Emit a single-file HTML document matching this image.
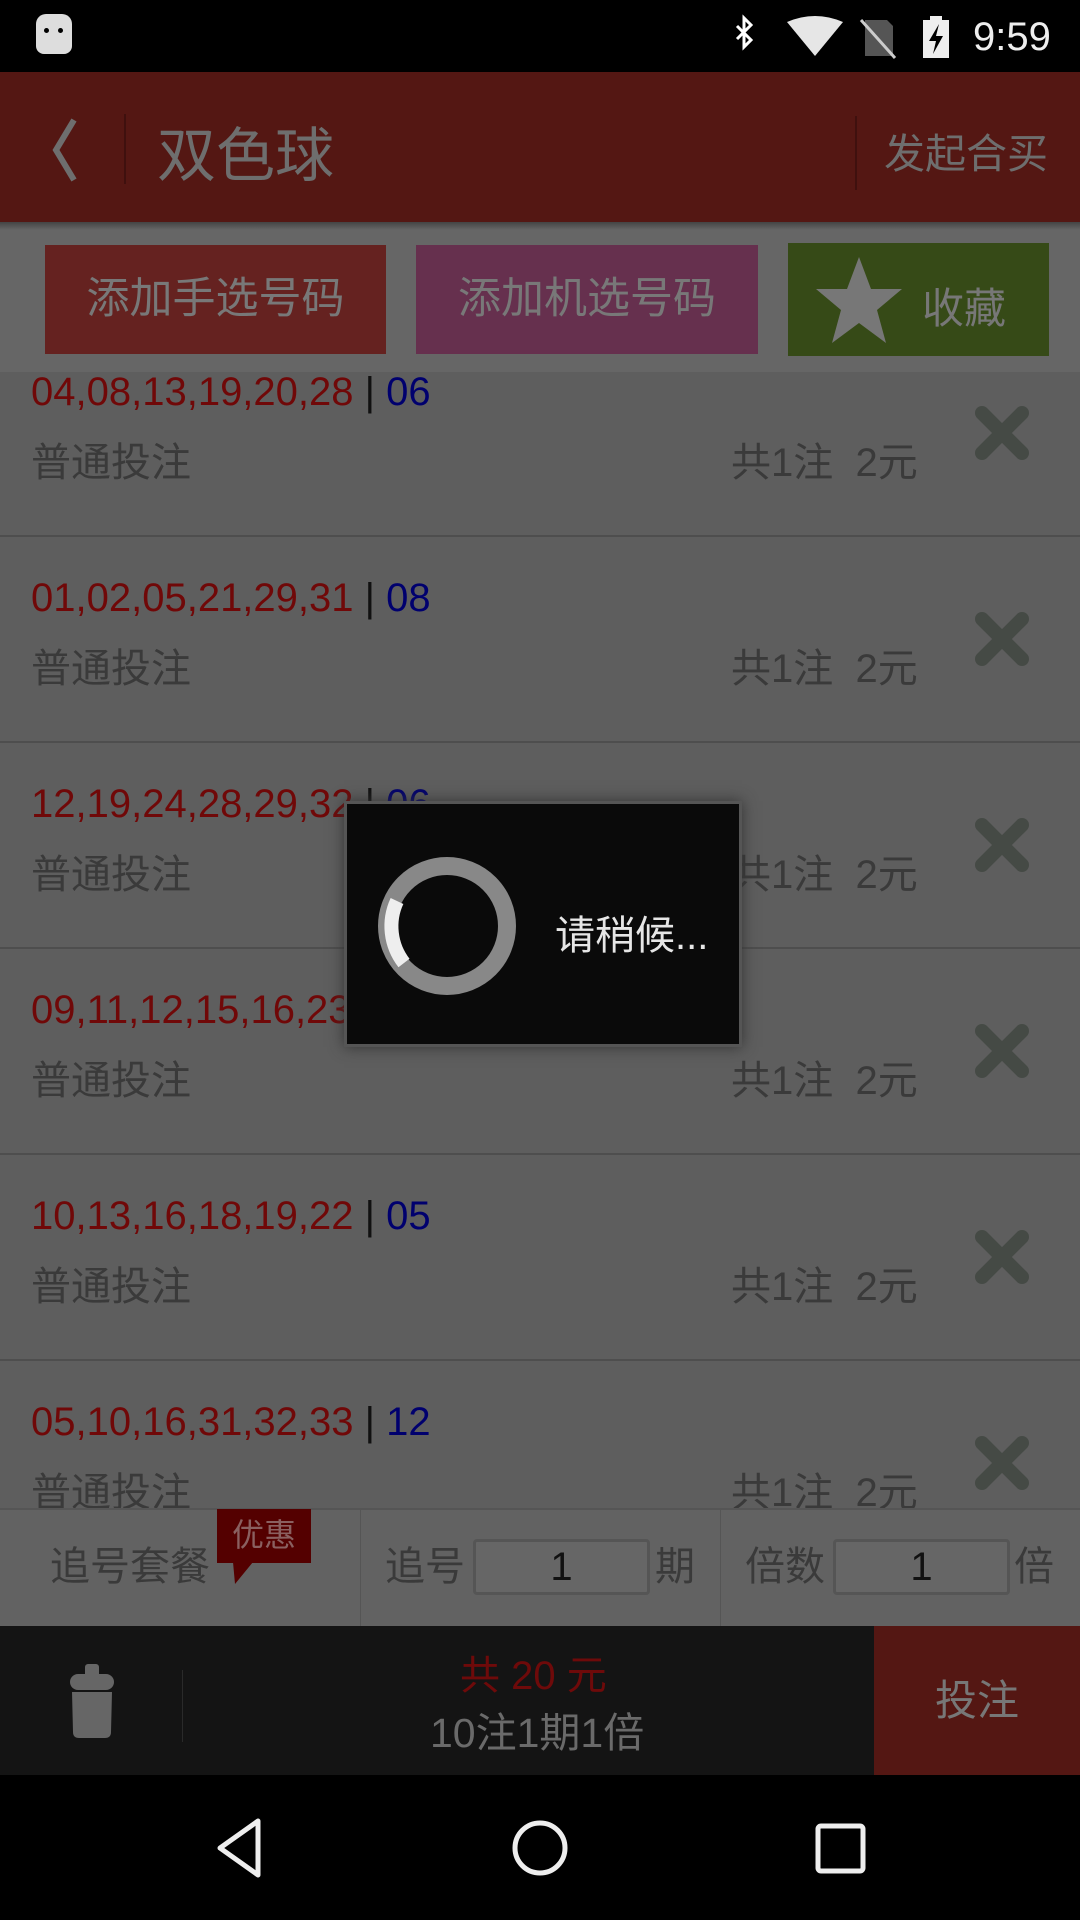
<!DOCTYPE html><html><head><meta charset="utf-8"><style>
*{margin:0;padding:0;box-sizing:border-box}
body{width:1080px;height:1920px;position:relative;overflow:hidden;background:#5e5e5e;font-family:"Liberation Sans","Noto Sans CJK SC",sans-serif}
.a{position:absolute;white-space:nowrap}
.num{font-size:40px;color:#700808;line-height:1}
.num b{font-weight:normal;color:#111}
.num i{font-style:normal;color:#00006e}
.t{font-size:40px;color:#3a3a3a;line-height:1}
</style></head><body>
<div class="a" style="left:0;top:0;width:1080px;height:72px;background:#000"></div>
<div class="a" style="left:36px;top:14px;width:36px;height:40px;background:#ddd;border-radius:10px 10px 8px 8px"></div>
<div class="a" style="left:44px;top:28px;width:5px;height:5px;background:#000;border-radius:50%"></div>
<div class="a" style="left:58px;top:28px;width:5px;height:5px;background:#000;border-radius:50%"></div>
<svg class="a" style="left:725px;top:12px" width="330" height="50" viewBox="0 0 330 50">
<path d="M12 14 L26 28 L19 35 L19 6 L26 13 L12 27" stroke="#fff" stroke-width="3" fill="none"/>
<path d="M62 10 Q90 -2 118 10 L90 44 Z" fill="#e6e6e6"/>
<path d="M140 8 H162 L168 14 V44 H140 Z" fill="#555"/><path d="M136 8 L170 46" stroke="#ccc" stroke-width="3"/>
<rect x="198" y="8" width="26" height="38" fill="#eee"/><rect x="205" y="4" width="12" height="5" fill="#eee"/>
<path d="M214 12 L204 29 H211 L208 42 L218 24 H211 Z" fill="#000"/>
<text x="248" y="38" fill="#eee" font-size="40" font-family="Liberation Sans">9:59</text>
</svg>
<div class="a" style="left:0;top:72px;width:1080px;height:150px;background:#541713"></div>
<svg class="a" style="left:44px;top:114px" width="40" height="70"><path d="M30 6 L12 36 L30 66" stroke="#6e6e6e" stroke-width="6" fill="none"/></svg>
<div class="a" style="left:124px;top:114px;width:2px;height:70px;background:#3f100e"></div>
<div class="a" style="left:157px;top:108px;font-size:59px;color:#6e6e6e">双色球</div>
<div class="a" style="left:855px;top:116px;width:2px;height:74px;background:#3f100e"></div>
<div class="a" style="left:884px;top:120px;font-size:41px;color:#6e6e6e">发起合买</div>
<div class="a" style="left:0;top:222px;width:1080px;height:150px;background:#666"></div>
<div class="a" style="left:0;top:222px;width:1080px;height:8px;background:linear-gradient(#444,#666)"></div>
<div class="a" style="left:45px;top:245px;width:341px;height:109px;background:#652220;color:#787878;font-size:43px;text-align:center;line-height:109px">添加手选号码</div>
<div class="a" style="left:416px;top:245px;width:342px;height:109px;background:#66304e;color:#787878;font-size:43px;text-align:center;line-height:109px">添加机选号码</div>
<div class="a" style="left:788px;top:243px;width:261px;height:113px;background:#364a17"></div>
<svg class="a" style="left:814px;top:255px" width="90" height="90" viewBox="0 0 90 90"><path d="M45 2 L57 34 L88 34 L63 55 L72 88 L45 68 L18 88 L27 55 L2 34 L33 34 Z" fill="#777"/></svg>
<div class="a" style="left:922px;top:275px;font-size:42px;color:#777">收藏</div>
<div class="a" style="left:0;top:372px;width:1080px;height:1136px;overflow:hidden">
<div style="position:relative;top:-372px">
<div class="a num" style="left:31px;top:372px">04,08,13,19,20,28 <b>|</b> <i>06</i></div>
<div class="a num" style="left:31px;top:578px">01,02,05,21,29,31 <b>|</b> <i>08</i></div>
<div class="a num" style="left:31px;top:784px">12,19,24,28,29,32 <b>|</b> <i>06</i></div>
<div class="a num" style="left:31px;top:990px">09,11,12,15,16,23 <b>|</b> <i>02</i></div>
<div class="a num" style="left:31px;top:1196px">10,13,16,18,19,22 <b>|</b> <i>05</i></div>
<div class="a num" style="left:31px;top:1402px">05,10,16,31,32,33 <b>|</b> <i>12</i></div>
</div></div>
<div class="a" style="left:0;top:372px;width:1080px;height:1136px;overflow:hidden">
<div style="position:relative;top:-372px" id="r"></div></div>
<script>
var h='';for(var k=0;k<6;k++){var y=206*k;
h+='<div class="a t" style="left:31px;top:'+(443+y)+'px">普通投注</div>';
h+='<div class="a t" style="left:731px;top:'+(443+y)+'px">共1注&nbsp;&nbsp;2元</div>';
h+='<svg class="a" style="left:974px;top:'+(405+y)+'px" width="56" height="56" viewBox="0 0 56 56"><path d="M8 8 L48 48 M48 8 L8 48" stroke="#454a45" stroke-width="14" stroke-linecap="round"/></svg>';
h+='<div class="a" style="left:0;top:'+(535+y)+'px;width:1080px;height:2px;background:#4e4e4e"></div>';}
document.getElementById('r').innerHTML=h;
</script>
<div class="a" style="left:0;top:1508px;width:1080px;height:118px;background:#626262;border-top:2px solid #555"></div>
<div class="a" style="left:360px;top:1508px;width:1px;height:118px;background:#555"></div>
<div class="a" style="left:720px;top:1508px;width:1px;height:118px;background:#555"></div>
<div class="a t" style="left:50px;top:1547px">追号套餐</div>
<div class="a" style="left:217px;top:1509px;width:94px;height:54px;background:#540000;color:#8a6060;font-size:32px;text-align:center;line-height:52px">优惠</div>
<svg class="a" style="left:233px;top:1562px" width="22" height="22"><path d="M0 0 H20 L2 22 Z" fill="#540000"/></svg>
<div class="a t" style="left:385px;top:1547px">追号</div>
<div class="a" style="left:473px;top:1539px;width:177px;height:56px;border:3px solid #555;border-radius:4px;background:#666;font-size:40px;color:#111;text-align:center;line-height:50px">1</div>
<div class="a t" style="left:655px;top:1547px">期</div>
<div class="a t" style="left:745px;top:1547px">倍数</div>
<div class="a" style="left:833px;top:1539px;width:177px;height:56px;border:3px solid #555;border-radius:4px;background:#666;font-size:40px;color:#111;text-align:center;line-height:50px">1</div>
<div class="a t" style="left:1014px;top:1547px">倍</div>
<div class="a" style="left:0;top:1626px;width:874px;height:149px;background:#141414"></div>
<svg class="a" style="left:68px;top:1664px" width="50" height="76"><rect x="17" y="0" width="14" height="14" rx="3" fill="#666"/><rect x="2" y="10" width="44" height="16" rx="8" fill="#666"/><path d="M4 28 H44 L43 68 Q43 74 37 74 H11 Q5 74 5 68 Z" fill="#666"/></svg>
<div class="a" style="left:182px;top:1670px;width:1px;height:72px;background:#2a2a2a"></div>
<div class="a" style="left:460px;top:1643px;font-size:40px;color:#6e0a0a">共 20 元</div>
<div class="a" style="left:430px;top:1699px;font-size:41px;color:#6a6a6a">10注1期1倍</div>
<div class="a" style="left:874px;top:1626px;width:206px;height:149px;background:#541713;color:#777;font-size:42px;text-align:center;line-height:149px">投注</div>
<div class="a" style="left:0;top:1775px;width:1080px;height:145px;background:#000"></div>
<svg class="a" style="left:0;top:1775px" width="1080" height="145"><path d="M258 46 L220 73 L258 100 Z" stroke="#eee" stroke-width="5" fill="none" stroke-linejoin="round"/><circle cx="540" cy="73" r="25" stroke="#eee" stroke-width="5" fill="none"/><rect x="818" y="51" width="45" height="45" rx="3" stroke="#eee" stroke-width="5" fill="none"/></svg>
<div class="a" style="left:344px;top:801px;width:398px;height:246px;background:#0a0a0a;border:3px solid #555;box-shadow:0 0 14px #333"></div>
<svg class="a" style="left:374px;top:853px" width="146" height="146"><circle cx="73" cy="73" r="60" stroke="#888" stroke-width="18" fill="none"/><path d="M23 48 A60 60 0 0 0 30 110" stroke="#eee" stroke-width="14" fill="none"/></svg>
<div class="a" style="left:555px;top:903px;font-size:40px;color:#e6e6e6">请稍候...</div>
</body></html>
